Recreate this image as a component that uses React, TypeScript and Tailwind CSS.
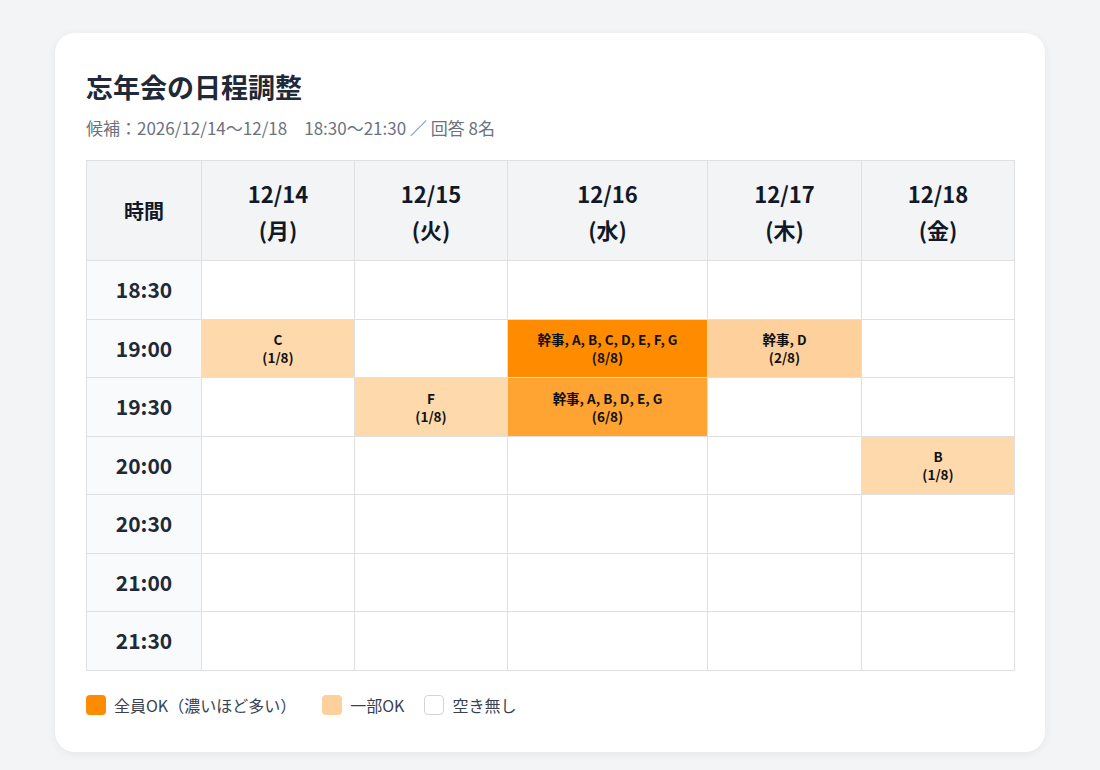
const days = [
  { d: '12/14', w: '月', width: 'w-[153px]' },
  { d: '12/15', w: '火', width: 'w-[153px]' },
  { d: '12/16', w: '水', width: 'w-[200px]' },
  { d: '12/17', w: '木', width: 'w-[154px]' },
  { d: '12/18', w: '金', width: 'w-[153px]' },
]

const times = ['18:30', '19:00', '19:30', '20:00', '20:30', '21:00', '21:30']

// key: time-dayIndex
const cells: Record<string, { names: string; count: string; bg: string }> = {
  '19:00-0': { names: 'C', count: '(1/8)', bg: 'bg-[#fed9ac]' },
  '19:00-2': { names: '幹事, A, B, C, D, E, F, G', count: '(8/8)', bg: 'bg-[#ff8c00]' },
  '19:00-3': { names: '幹事, D', count: '(2/8)', bg: 'bg-[#fdd09c]' },
  '19:30-1': { names: 'F', count: '(1/8)', bg: 'bg-[#fed9ac]' },
  '19:30-2': { names: '幹事, A, B, D, E, G', count: '(6/8)', bg: 'bg-[#ffa333]' },
  '20:00-4': { names: 'B', count: '(1/8)', bg: 'bg-[#fed9ac]' },
}

export default function App() {
  return (
    <div
      className="min-h-[770px] bg-[#f3f4f6] pt-[33px] px-[55px]"
      style={{ fontFamily: '"Noto Sans CJK JP", "Noto Sans", sans-serif' }}
    >
      <div className="w-[990px] h-[719px] bg-white rounded-[20px] shadow-[0_2px_10px_rgba(0,0,0,0.06)] px-[31px] pt-[34px]">
        <h1 className="text-[27px] font-bold text-[#1f2937] leading-[40px]">忘年会の日程調整</h1>
        <p className="mt-[9px] text-[17px] text-[#6b7280] leading-[24px]">
          候補：2026/12/14〜12/18　18:30〜21:30 ／ 回答 8名
        </p>

        <table className="mt-[20px] border-collapse table-fixed w-[928px] text-[#111827]">
          <thead>
            <tr className="h-[100px] bg-[#f3f4f6]">
              <th className="w-[115px] border border-[#e0e0e0] text-[20px] font-bold">時間</th>
              {days.map((d) => (
                <th key={d.d} className={`${d.width} border border-[#e0e0e0] text-[22px] font-bold leading-[36px]`}>
                  {d.d}
                  <br />({d.w})
                </th>
              ))}
            </tr>
          </thead>
          <tbody>
            {times.map((t) => (
              <tr key={t} className="h-[58.5px]">
                <td className="border border-[#e0e0e0] bg-[#f9fafb] text-center text-[21px] font-bold text-[#1f2937]">{t}</td>
                {days.map((_, i) => {
                  const c = cells[`${t}-${i}`]
                  return (
                    <td
                      key={i}
                      className={`border border-[#e0e0e0] text-center text-[13.5px] font-bold leading-[18px] text-[#111] ${c ? c.bg : 'bg-white'}`}
                    >
                      {c && (
                        <>
                          {c.names}
                          <br />
                          {c.count}
                        </>
                      )}
                    </td>
                  )
                })}
              </tr>
            ))}
          </tbody>
        </table>

        <div className="mt-[22px] flex items-center text-[16px] text-[#374151]">
          <span className="w-[20px] h-[20px] rounded-[4px] bg-[#ff8c00] mr-[8px]" />
          <span className="mr-[26px]">全員OK（濃いほど多い）</span>
          <span className="w-[20px] h-[20px] rounded-[4px] bg-[#fed09c] mr-[8px]" />
          <span className="mr-[20px]">一部OK</span>
          <span className="w-[20px] h-[20px] rounded-[4px] bg-white border border-[#d1d5db] mr-[8px]" />
          <span>空き無し</span>
        </div>
      </div>
    </div>
  )
}
